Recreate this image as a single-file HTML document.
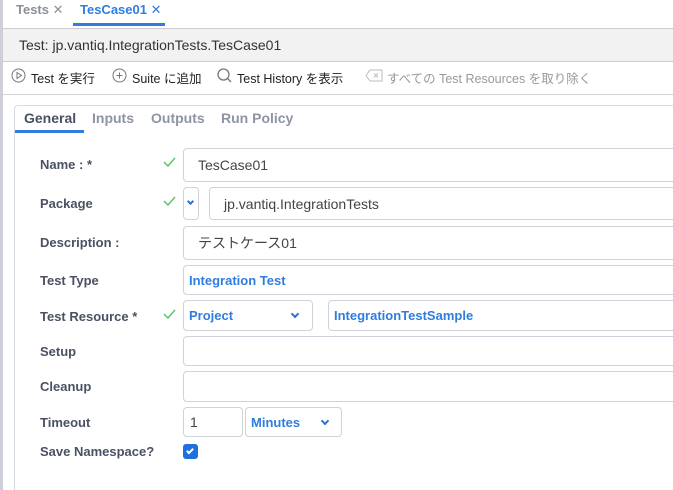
<!DOCTYPE html>
<html style="width:673px;height:490px;overflow:hidden"><head><meta charset="utf-8"><style>
*{box-sizing:border-box;margin:0;padding:0}
body{width:673px;height:490px;overflow:hidden;background:#fff;font-family:"Liberation Sans","Noto Sans CJK JP",sans-serif;position:relative;color:#333}
.a{position:absolute}
.lbl{position:absolute;left:40px;font-size:13px;font-weight:bold;color:#4a5163}
.in{position:absolute;border:1px solid #cfd2d8;border-radius:4px;background:#fff;font-size:14px;color:#444;padding-left:14px;display:flex;align-items:center}
.blue{color:#2f7de1;font-weight:bold;font-size:13px;padding-left:5px}
.ck{position:absolute;left:163px}
.chev{position:absolute;width:6px;height:6px;border-right:2px solid #2f6fd6;border-bottom:2px solid #2f6fd6;transform:rotate(45deg)}
.tb{position:absolute;top:68px;font-size:12.5px;color:#222;white-space:nowrap}
</style></head><body>
<div class="a" style="left:0;top:0;width:3px;height:490px;background:#cdd0da"></div>
<div class="a" style="left:16px;top:2px;font-size:13px;font-weight:bold;color:#8a8f99">Tests <span style="font-weight:normal">✕</span></div>
<div class="a" style="left:80px;top:2px;font-size:13px;font-weight:bold;color:#2f7de1">TesCase01 <span style="font-weight:normal">✕</span></div>
<div class="a" style="left:73px;top:23px;width:92px;height:3px;background:#2f7de1"></div>
<div class="a" style="left:3px;top:28px;width:670px;height:34px;background:#f2f2f2;border-top:1px solid #ccc;border-bottom:1px solid #ccc"></div>
<div class="a" style="left:19px;top:37px;font-size:14px;color:#333">Test: jp.vantiq.IntegrationTests.TesCase01</div>
<div class="a" style="left:3px;top:94px;width:670px;border-top:1px solid #d4d4d4"></div>
<svg class="a" style="left:11px;top:68px" width="15" height="15"><circle cx="7.5" cy="7.5" r="6.5" fill="none" stroke="#777"/><path d="M6 4.5v6l4.5-3z" fill="none" stroke="#777"/></svg>
<div class="tb" style="left:31px">Test を実行</div>
<svg class="a" style="left:112px;top:68px" width="15" height="15"><circle cx="7.5" cy="7.5" r="6.5" fill="none" stroke="#777"/><path d="M7.5 4.5v6M4.5 7.5h6" stroke="#777"/></svg>
<div class="tb" style="left:132px">Suite に追加</div>
<svg class="a" style="left:217px;top:68px" width="15" height="15"><circle cx="6.5" cy="6.5" r="5.5" fill="none" stroke="#777" stroke-width="1.3"/><path d="M10.5 10.5l3.5 3.5" stroke="#777" stroke-width="1.3"/></svg>
<div class="tb" style="left:237px">Test History を表示</div>
<svg class="a" style="left:365px;top:69px" width="18" height="13"><path d="M5 1h12v11H5L1 6.5z" fill="none" stroke="#bbb"/><path d="M9 4.5l4 4M13 4.5l-4 4" stroke="#bbb"/></svg>
<div class="tb" style="left:387px;color:#999">すべての Test Resources を取り除く</div>
<div class="a" style="left:14px;top:105px;width:670px;height:400px;border:1px solid #d8dbe0;border-radius:4px"></div>
<div class="a" style="left:24px;top:110px;font-size:14px;font-weight:bold;color:#4a5163">General</div>
<div class="a" style="left:92px;top:110px;font-size:14px;font-weight:bold;color:#8d94a3">Inputs</div>
<div class="a" style="left:151px;top:110px;font-size:14px;font-weight:bold;color:#8d94a3">Outputs</div>
<div class="a" style="left:221px;top:110px;font-size:14px;font-weight:bold;color:#8d94a3">Run Policy</div>
<div class="a" style="left:15px;top:130px;width:69px;height:3px;background:#2f7de1"></div>

<div class="lbl" style="top:157px">Name : *</div><svg class="ck" style="top:157px" width="13" height="10"><path d="M1 5l4 4 7-8" fill="none" stroke="#5cc46a" stroke-width="1.5"/></svg>
<div class="in" style="left:183px;top:148px;width:500px;height:34px">TesCase01</div>
<div class="lbl" style="top:196px">Package</div><svg class="ck" style="top:196px" width="13" height="10"><path d="M1 5l4 4 7-8" fill="none" stroke="#5cc46a" stroke-width="1.5"/></svg>
<div class="in" style="left:183px;top:187px;width:16px;height:33px"><div class="chev" style="left:4px;top:11px;width:5px;height:5px"></div></div>
<div class="in" style="left:209px;top:187px;width:480px;height:33px">jp.vantiq.IntegrationTests</div>
<div class="lbl" style="top:235px">Description :</div>
<div class="in" style="left:183px;top:226px;width:500px;height:34px">テストケース01</div>
<div class="lbl" style="top:273px">Test Type</div>
<div class="in blue" style="left:183px;top:265px;width:500px;height:30px">Integration Test</div>
<div class="lbl" style="top:309px">Test Resource *</div><svg class="ck" style="top:309px" width="13" height="10"><path d="M1 5l4 4 7-8" fill="none" stroke="#5cc46a" stroke-width="1.5"/></svg>
<div class="in blue" style="left:183px;top:300px;width:130px;height:31px">Project<div class="chev" style="left:108px;top:10px"></div></div>
<div class="in blue" style="left:328px;top:300px;width:360px;height:31px">IntegrationTestSample</div>
<div class="lbl" style="top:344px">Setup</div>
<div class="in" style="left:183px;top:336px;width:500px;height:30px"></div>
<div class="lbl" style="top:379px">Cleanup</div>
<div class="in" style="left:183px;top:371px;width:500px;height:31px"></div>
<div class="lbl" style="top:415px">Timeout</div>
<div class="in" style="left:183px;top:407px;width:60px;height:30px;padding-left:6px">1</div>
<div class="in blue" style="left:245px;top:407px;width:97px;height:30px">Minutes<div class="chev" style="left:76px;top:10px"></div></div>
<div class="lbl" style="top:444px">Save Namespace?</div>
<div class="a" style="left:183px;top:444px;width:15px;height:15px;background:#1f6fe0;border-radius:3px"><div class="a" style="left:5px;top:3px;width:4px;height:7px;border-right:2px solid #fff;border-bottom:2px solid #fff;transform:rotate(45deg)"></div></div>
</body></html>
